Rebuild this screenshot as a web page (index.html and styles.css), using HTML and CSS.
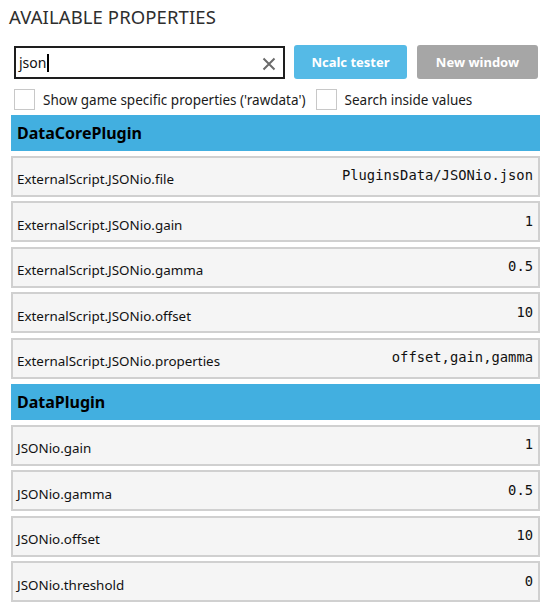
FILE: index.html
```html
<!DOCTYPE html>
<html>
<head>
<meta charset="utf-8">
<link rel="stylesheet" href="styles.css">
</head>
<body>
<div class="panel">
  <h1 class="title">AVAILABLE PROPERTIES</h1>
  <div class="toolbar">
    <div class="search">
      <span class="search-text">json</span><span class="caret"></span>
      <svg class="clear" width="14" height="14" viewBox="0 0 14 14"><path d="M1.5 1.5 L12.5 12.5 M12.5 1.5 L1.5 12.5" stroke="#6b6b6b" stroke-width="2" fill="none"/></svg>
    </div>
    <button class="btn btn-blue">Ncalc tester</button>
    <button class="btn btn-gray">New window</button>
  </div>
  <div class="options">
    <label class="opt"><span class="box"></span><span>Show game specific properties ('rawdata')</span></label>
    <label class="opt"><span class="box"></span><span>Search inside values</span></label>
  </div>

  <div class="group first">
    <div class="group-head">DataCorePlugin</div>
    <div class="row"><span class="name">ExternalScript.JSONio.file</span><span class="value">PluginsData/JSONio.json</span></div>
    <div class="row"><span class="name">ExternalScript.JSONio.gain</span><span class="value">1</span></div>
    <div class="row"><span class="name">ExternalScript.JSONio.gamma</span><span class="value">0.5</span></div>
    <div class="row"><span class="name">ExternalScript.JSONio.offset</span><span class="value">10</span></div>
    <div class="row"><span class="name">ExternalScript.JSONio.properties</span><span class="value">offset,gain,gamma</span></div>
  </div>

  <div class="group">
    <div class="group-head">DataPlugin</div>
    <div class="row"><span class="name">JSONio.gain</span><span class="value">1</span></div>
    <div class="row"><span class="name">JSONio.gamma</span><span class="value">0.5</span></div>
    <div class="row"><span class="name">JSONio.offset</span><span class="value">10</span></div>
    <div class="row"><span class="name">JSONio.threshold</span><span class="value">0</span></div>
  </div>
</div>
</body>
</html>
```
FILE: styles.css
```css
* { box-sizing: border-box; }
html, body { margin: 0; padding: 0; background: #ffffff; }
body {
  font-family: "Noto Sans", "Open Sans", sans-serif;
  color: #1a1a1a;
  width: 545px;
  height: 610px;
  overflow: hidden;
}
.panel { padding: 5px 5px 0 11px; }
.title {
  margin: 0 0 16px -2px;
  font-size: 18.5px;
  line-height: 24px;
  font-weight: 400;
  color: #2e2e2e;
  letter-spacing: 0.1px;
}
.toolbar {
  display: flex;
  align-items: flex-start;
  padding-left: 3px;
  height: 34px;
}
.search {
  position: relative;
  margin-top: 1px;
  width: 271px;
  height: 33px;
  border: 2px solid #1e1e1e;
  display: flex;
  align-items: center;
  padding-left: 3px;
  font-size: 14px;
}
.search-text { color: #111; }
.caret {
  display: inline-block;
  width: 2px;
  height: 18px;
  background: #000;
  margin-left: 1px;
}
.clear { position: absolute; right: 7px; top: 9px; }
.btn {
  border: none;
  border-radius: 3px;
  height: 34px;
  font-family: inherit;
  font-size: 13px;
  font-weight: 700;
  color: #ffffff;
  padding: 0;
}
.btn-blue { background: #55bae6; width: 113px; margin-left: 9px; }
.btn-gray { background: #a6a6a6; width: 121px; margin-left: 10px; }
.options {
  display: flex;
  align-items: center;
  padding-left: 3px;
  margin-top: 10px;
  height: 21px;
  font-size: 13.5px;
  color: #1a1a1a;
}
.opt { display: flex; align-items: center; }
.opt + .opt { margin-left: 10px; }
.box {
  width: 21px;
  height: 21px;
  border: 1px solid #c8c8c8;
  background: #fff;
  margin-right: 8px;
}
.group { margin-top: 5px; }
.group.first { margin-top: 5px; }
.group-head {
  height: 36px;
  background: #42afe0;
  color: #000;
  font-weight: 700;
  font-size: 16px;
  display: flex;
  align-items: center;
  padding-left: 6px;
}
.group.first .group-head { margin-bottom: 4px; }
.group + .group { margin-top: 5.5px; }
.row {
  margin-top: 4.5px;
  height: 41px;
  background: #f5f5f5;
  border: 2px solid #d0d0d0;
  display: flex;
  align-items: center;
  justify-content: space-between;
  padding: 0 5px 0 4px;
}
.name {
  font-size: 13.4px;
  color: #111;
  margin-top: 6px;
}
.value {
  font-family: "DejaVu Sans Mono", "Liberation Mono", monospace;
  font-size: 13.8px;
  color: #111;
  margin-bottom: 2px;
}
```
